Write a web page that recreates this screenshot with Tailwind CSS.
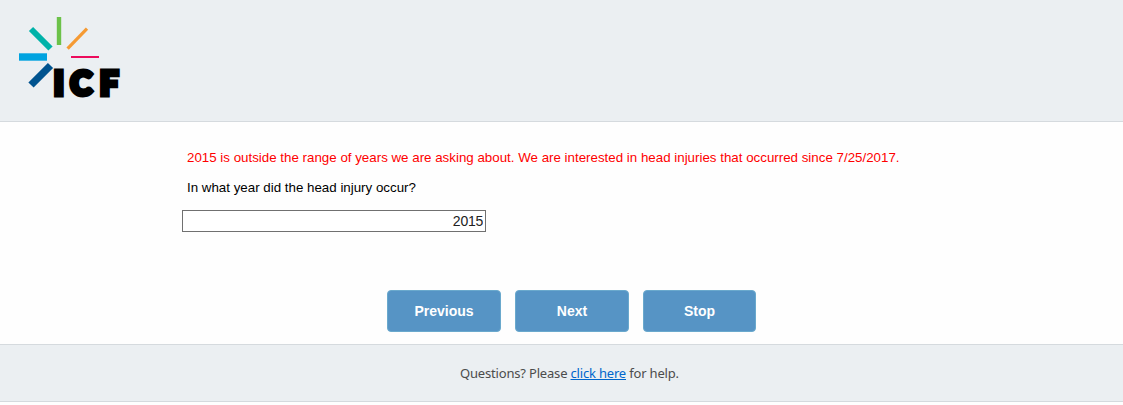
<!DOCTYPE html>
<html lang="en">

<head>
    <meta charset="UTF-8">
    <meta name="viewport" content="width=device-width, initial-scale=1.0">
    <title>ICF Survey</title>
    <script src="https://cdn.jsdelivr.net/npm/@tailwindcss/browser@4"></script>
</head>

<body class="bg-[#fefefe] text-black font-['Liberation_Sans',Arial,sans-serif] overflow-hidden">
    <!-- Header -->
    <header class="h-[122px] bg-[#ebeff2] border-b border-[#d5dade] pl-4 pt-3">
        <svg class="block" width="108" height="92" viewBox="16 12 108 92" role="img" aria-label="ICF">
            <g fill="none">
                <path d="M59 17V45" stroke="#6cc24a" stroke-width="4.4" />
                <path d="M87 28.7L67.6 48.7" stroke="#f59a33" stroke-width="3.2" />
                <path d="M71 57H99" stroke="#ec0b5c" stroke-width="2" />
                <path d="M31 29L50.5 48.5" stroke="#00b2a9" stroke-width="6" />
                <path d="M19 57H47" stroke="#00a3e0" stroke-width="7.4" />
                <path d="M50.5 65.5L31 85" stroke="#00538f" stroke-width="7.4" />
            </g>
            <g class="font-['Lato',sans-serif] font-black" font-size="32" fill="#000" stroke="#000" stroke-width="5">
                <text x="54" y="94.5">I</text>
                <text x="70.5" y="94.5">C</text>
                <text x="100" y="94.5">F</text>
            </g>
        </svg>
    </header>

    <!-- Question -->
    <main class="h-[222px] flex flex-col">
        <div class="pl-[187px] pt-[26px] text-[10pt] leading-5">
            <p class="text-[#ff0000] whitespace-nowrap">2015 is outside the range of years we are asking about. We are interested in head injuries that occurred since 7/25/2017.</p>
            <p class="mt-2.5"><label for="year">In what year did the head injury occur?</label></p>
        </div>
        <input id="year" type="text" value="2015"
            class="ml-[182px] mt-3 w-[304px] h-[22px] shrink-0 border border-[#707070] bg-white px-0.5 text-right text-[14px] tracking-[-0.25px] text-[#222]">
        <div class="flex gap-3.5 ml-[387px] mt-[58px] text-[14px] font-bold text-white">
            <button class="w-[114px] h-[42px] rounded-[4px] bg-[#5694c5] border border-[#6aa9cd]">Previous</button>
            <button class="w-[114px] h-[42px] rounded-[4px] bg-[#5694c5] border border-[#6aa9cd]">Next</button>
            <button class="w-[113px] h-[42px] rounded-[4px] bg-[#5694c5] border border-[#6aa9cd]">Stop</button>
        </div>
    </main>

    <!-- Footer -->
    <footer class="h-[58px] bg-[#ebeff2] border-y border-[#d5dade] pl-[460px] pt-[18px] text-[13px] leading-5 tracking-[-0.18px] text-[#4c4c4c] font-['Noto_Sans',sans-serif] whitespace-nowrap">
        Questions? Please <a href="#" class="text-[#0066cc] underline">click here</a> for help.
    </footer>
</body>

</html>
